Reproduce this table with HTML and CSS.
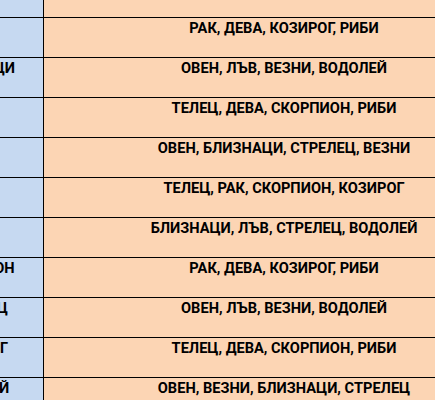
FILE: index.html
```html
<!DOCTYPE html>
<html lang="bg">
<head>
<meta charset="utf-8">
<title>Съвместимост на зодиите</title>
<link rel="stylesheet" href="styles.css">
</head>
<body>
<div class="table">
  <div class="sign">ОВЕН</div><div class="match">ЛЪВ, СТРЕЛЕЦ, БЛИЗНАЦИ, ВОДОЛЕЙ</div>
  <div class="sign">ТЕЛЕЦ</div><div class="match">РАК, ДЕВА, КОЗИРОГ, РИБИ</div>
  <div class="sign">БЛИЗНАЦИ</div><div class="match">ОВЕН, ЛЪВ, ВЕЗНИ, ВОДОЛЕЙ</div>
  <div class="sign">РАК</div><div class="match">ТЕЛЕЦ, ДЕВА, СКОРПИОН, РИБИ</div>
  <div class="sign">ЛЪВ</div><div class="match">ОВЕН, БЛИЗНАЦИ, СТРЕЛЕЦ, ВЕЗНИ</div>
  <div class="sign">ДЕВА</div><div class="match">ТЕЛЕЦ, РАК, СКОРПИОН, КОЗИРОГ</div>
  <div class="sign">ВЕЗНИ</div><div class="match">БЛИЗНАЦИ, ЛЪВ, СТРЕЛЕЦ, ВОДОЛЕЙ</div>
  <div class="sign">СКОРПИОН</div><div class="match">РАК, ДЕВА, КОЗИРОГ, РИБИ</div>
  <div class="sign">СТРЕЛЕЦ</div><div class="match">ОВЕН, ЛЪВ, ВЕЗНИ, ВОДОЛЕЙ</div>
  <div class="sign">КОЗИРОГ</div><div class="match">ТЕЛЕЦ, ДЕВА, СКОРПИОН, РИБИ</div>
  <div class="sign">ВОДОЛЕЙ</div><div class="match">ОВЕН, ВЕЗНИ, БЛИЗНАЦИ, СТРЕЛЕЦ</div>
  <div class="sign">РИБИ</div><div class="match">РАК, СКОРПИОН, ТЕЛЕЦ, КОЗИРОГ</div>
</div>
</body>
</html>
```
FILE: styles.css
```css
html, body {
  margin: 0;
  padding: 0;
  background: #fcd5b4;
  overflow: hidden;
}

.table {
  display: grid;
  grid-template-columns: 137px 480px;
  grid-auto-rows: 40px;
  margin-left: -93px;
  margin-top: -22px;
  font-family: Roboto, "Liberation Sans", sans-serif;
  font-weight: 700;
  font-size: 14.6px;
  line-height: 17px;
  color: #000;
}

.sign,
.match {
  box-sizing: border-box;
  padding-top: 2px;
  text-align: center;
  white-space: nowrap;
  border-bottom: 1px solid #000;
}

.sign {
  background: #c6d9f1;
  border-right: 1px solid #000;
}

.match {
  background: #fcd5b4;
}
```
